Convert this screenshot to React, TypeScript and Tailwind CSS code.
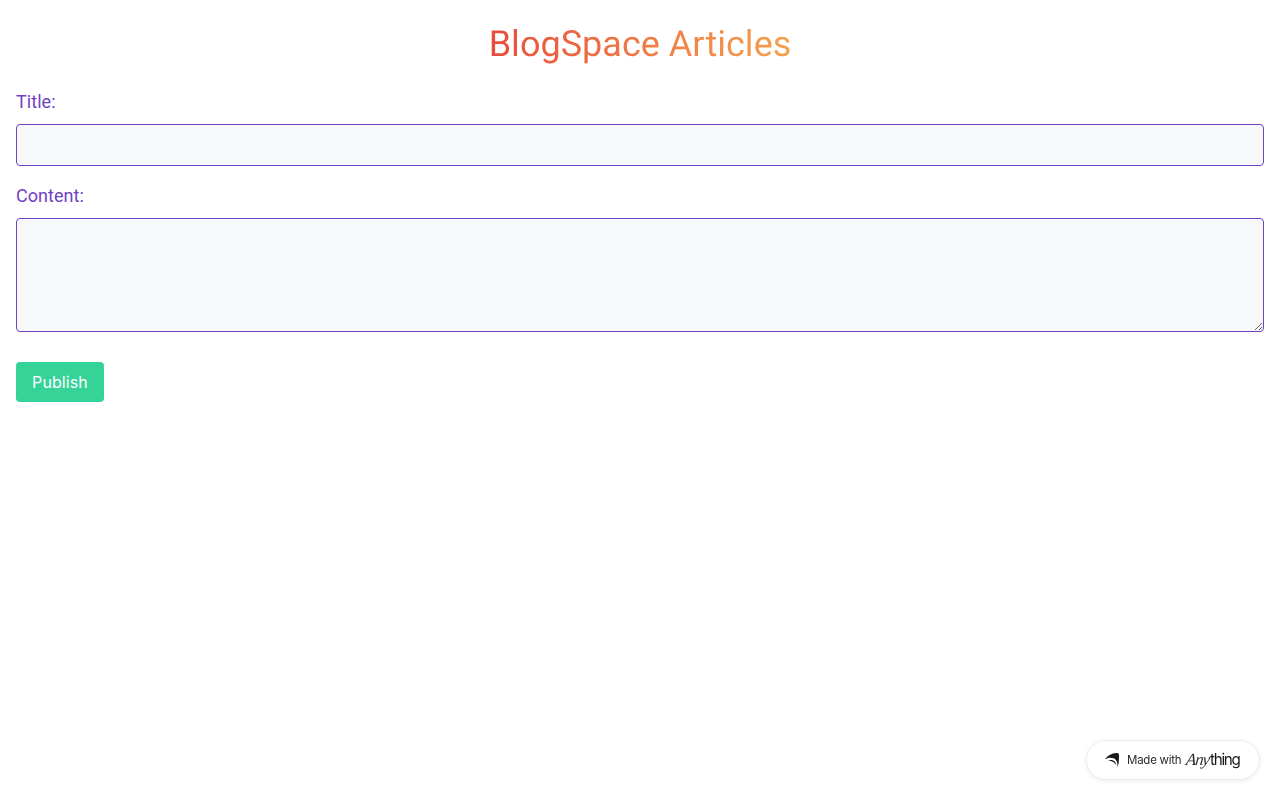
function AnythingBadge() {
  return (
    <a
      href="#"
      className="fixed right-5 bottom-5 flex h-10 w-[174px] items-center rounded-full border border-[#ececee] bg-white pl-[18px] shadow-[0_1px_4px_rgba(0,0,0,0.08)]"
    >
      <svg className="mr-[7px] h-[15px] w-[15px] shrink-0" viewBox="0 0 15 15" fill="#18191b">
        <path d="M0 6.300C2.400 2.800 6.500.3 11.600 0c1.500-.1 2.300.6 2.400 2 .2 4.300-.2 8.600-1.300 12.800C12.700 9.800 11.600 6.500 8.500 5.300 5.600 4.200 2.500 4.900 0 6.300Z" />
        <path d="M3.200 7.300C7.300 6 10.900 8 11.500 12.600 9.700 9.700 7 7.900 3.200 7.300Z" />
      </svg>
      <span className="w-[58px] shrink-0 font-['Inter',sans-serif] text-[11.500px] leading-4 tracking-[-0.25px] whitespace-nowrap text-[#2b2b30]">
        Made with
      </span>
      <span className="mb-0.5 flex items-baseline whitespace-nowrap text-[#18191b]">
        <span className="w-[24.500px] origin-bottom-left -skew-x-6 font-['Liberation_Serif',serif] text-[17px] leading-5 tracking-[-1.2px] text-[#303134] italic">
          Any
        </span>
        <span className="origin-left scale-x-95 font-['Inter',sans-serif] text-base leading-5 tracking-[-1.35px]">
          thing
        </span>
      </span>
    </a>
  );
}

export default function App() {
  return (
    <main className="min-h-screen bg-white p-4 font-['Roboto',sans-serif]">
      <header className="mt-2 mb-6 flex justify-center">
        <h1 className="bg-gradient-to-r from-[#e74c3c] to-[#f6a04d] bg-clip-text text-4xl tracking-[0.02px] text-transparent [text-rendering:geometricPrecision]">
          BlogSpace Articles
        </h1>
      </header>
      <form>
        <div className="mb-4">
          <label htmlFor="title" className="mb-2 block text-lg tracking-[0.05px] text-[#6f42c1]">
            Title:
          </label>
          <input
            id="title"
            type="text"
            className="block h-[42px] w-full rounded border border-[#6f42c1] bg-[#f7f8fa] p-2"
          />
        </div>
        <div className="mb-[30px]">
          <label htmlFor="content" className="mb-2 block text-lg tracking-[0.05px] text-[#6f42c1]">
            Content:
          </label>
          <textarea
            id="content"
            rows={4}
            className="block h-[114px] w-full rounded border border-[#6f42c1] bg-[#f7f8fa] p-2"
          />
        </div>
        <button
          type="button"
          className="h-10 w-[88px] rounded bg-[#36d399] text-center font-['Inter',sans-serif] text-base tracking-[0.1px] text-white"
        >
          Publish
        </button>
      </form>
      <AnythingBadge />
    </main>
  );
}
